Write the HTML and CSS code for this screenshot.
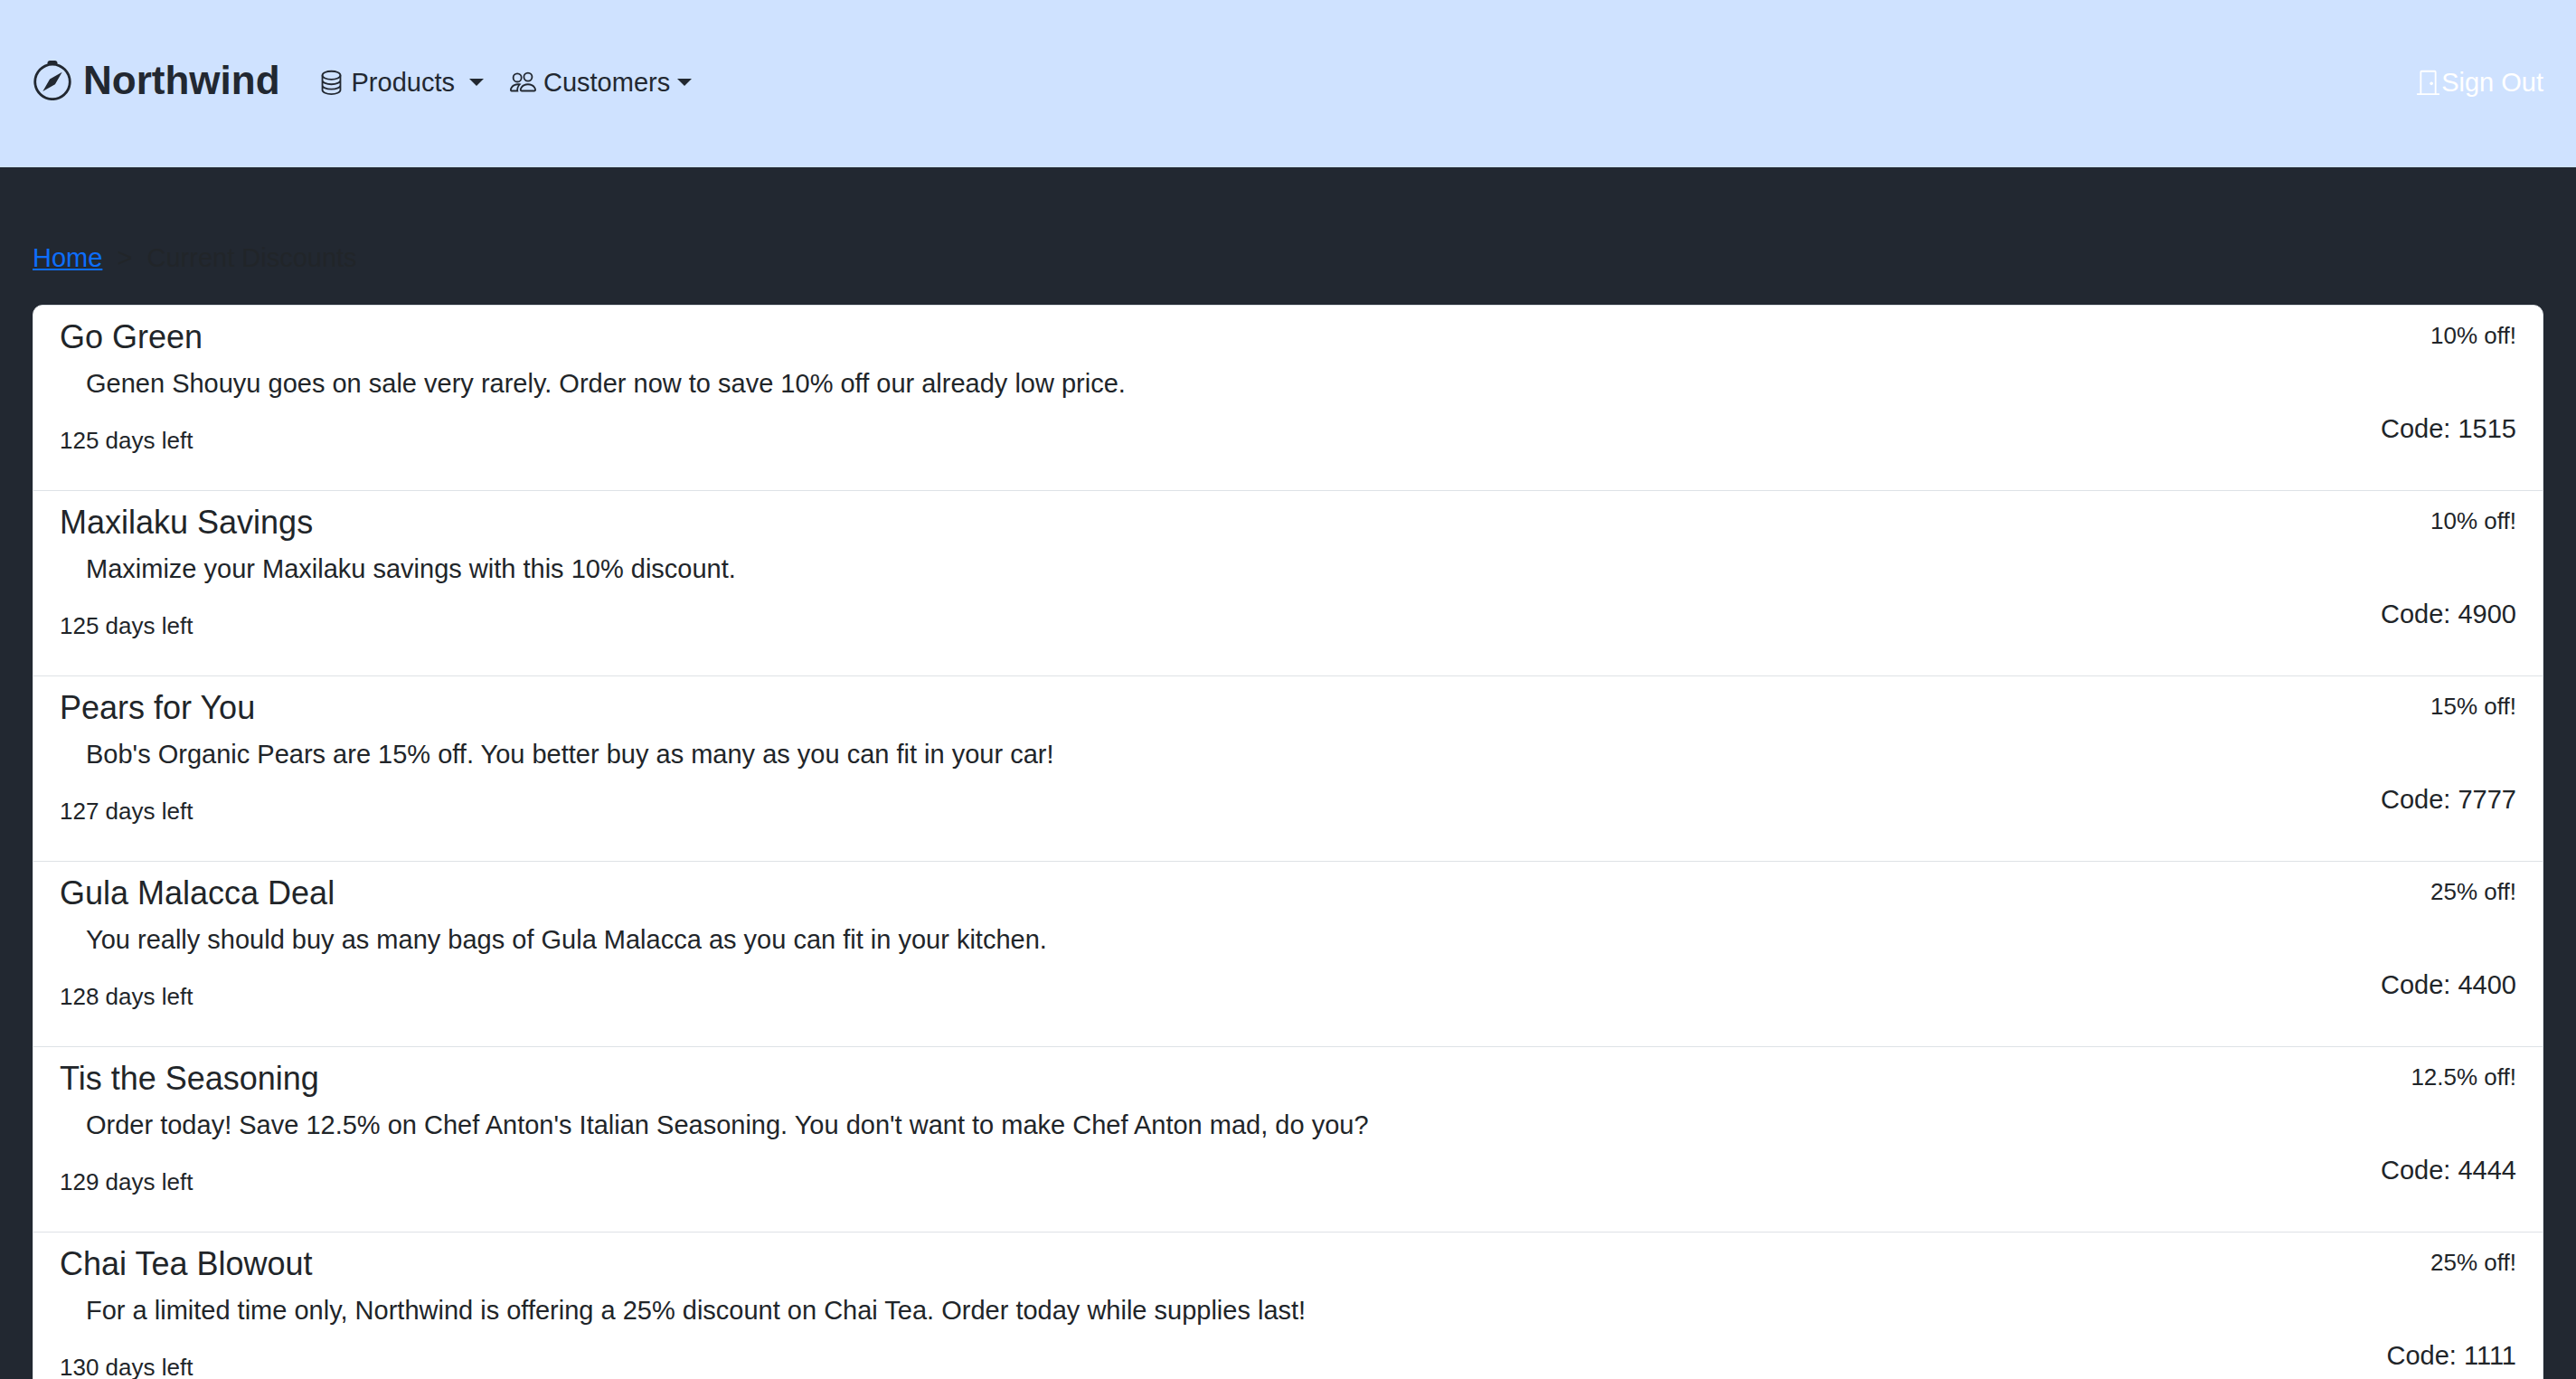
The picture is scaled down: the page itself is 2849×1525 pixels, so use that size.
FILE: index.html
```html
<!DOCTYPE html>
<html lang="en">
<head>
  <meta charset="utf-8">
  <meta name="viewport" content="width=device-width, initial-scale=1">
  <title>Northwind</title>
  <link rel="stylesheet" href="styles.css">
</head>
<body>
  <header class="navbar">
    <a class="brand" href="#">
      <svg class="brand-icon" viewBox="0 0 16 16" aria-hidden="true"><path d="M8 16.016a7.5 7.5 0 0 0 1.962-14.74A1 1 0 0 0 9 0H7a1 1 0 0 0-.962 1.276A7.5 7.5 0 0 0 8 16.016zm6.5-7.5a6.5 6.5 0 1 1-13 0 6.5 6.5 0 0 1 13 0z"/><path d="m6.94 7.44 4.95-2.83-2.83 4.95-4.949 2.83 2.828-4.95z"/></svg>
      Northwind
    </a>
    <nav class="menu">
      <button class="menu-item menu-item-wide" type="button">
        <svg class="icon" viewBox="0 0 16 16" aria-hidden="true"><g fill="none" stroke="currentColor"><ellipse cx="8" cy="4" rx="5.5" ry="2.5"/><path d="M2.5 4v9c0 1.38 2.46 2.5 5.5 2.5s5.5-1.12 5.5-2.5V4M2.5 7c0 1.38 2.46 2.5 5.5 2.5s5.5-1.12 5.5-2.5M2.5 10c0 1.38 2.46 2.5 5.5 2.5s5.5-1.12 5.5-2.5"/></g></svg>
        <span>Products</span>
        <span class="caret"></span>
      </button>
      <button class="menu-item" type="button">
        <svg class="icon" viewBox="0 0 16 16" aria-hidden="true"><path d="M15 14s1 0 1-1-1-4-5-4-5 3-5 4 1 1 1 1h8zm-7.978-1A.261.261 0 0 1 7 12.996c.001-.264.167-1.03.76-1.72C8.312 10.629 9.282 10 11 10c1.717 0 2.687.63 3.24 1.276.593.69.758 1.457.76 1.72l-.008.002a.274.274 0 0 1-.014.002H7.022zM11 7a2 2 0 1 0 0-4 2 2 0 0 0 0 4zm3-2a3 3 0 1 1-6 0 3 3 0 0 1 6 0zM6.936 9.28a5.88 5.88 0 0 0-1.23-.247A7.35 7.35 0 0 0 5 9c-4 0-5 3-5 4 0 .667.333 1 1 1h4.216A2.238 2.238 0 0 1 5 13c0-1.01.377-2.042 1.09-2.904.243-.294.526-.569.846-.816zM4.92 10A5.493 5.493 0 0 0 4 13H1c0-.26.164-1.03.76-1.724.545-.636 1.492-1.256 3.16-1.275zM1.5 5.5a3 3 0 1 1 6 0 3 3 0 0 1-6 0zm3-2a2 2 0 1 0 0 4 2 2 0 0 0 0-4z"/></svg>
        <span>Customers</span>
        <span class="caret"></span>
      </button>
    </nav>
    <a class="sign-out" href="#">
      <svg class="icon" viewBox="0 0 16 16" aria-hidden="true"><path d="M3 2a1 1 0 0 1 1-1h8a1 1 0 0 1 1 1v13h1.5a.5.5 0 0 1 0 1h-13a.5.5 0 0 1 0-1H3V2zm1 0v13h8V2H4z"/><path d="M9 9a1 1 0 1 0 2 0 1 1 0 0 0-2 0z"/></svg>
      Sign Out
    </a>
  </header>

  <main class="page">
    <p class="breadcrumb"><a href="#">Home</a> &nbsp;&gt;&nbsp; Current Discounts</p>

    <ul class="discounts">
      <li class="discount">
        <div class="details">
          <h2 class="title">Go Green</h2>
          <p class="description">Genen Shouyu goes on sale very rarely. Order now to save 10% off our already low price.</p>
          <small class="days">125 days left</small>
        </div>
        <div class="offer">
          <small class="percent">10% off!</small>
          <span class="code">Code: 1515</span>
        </div>
      </li>
      <li class="discount">
        <div class="details">
          <h2 class="title">Maxilaku Savings</h2>
          <p class="description">Maximize your Maxilaku savings with this 10% discount.</p>
          <small class="days">125 days left</small>
        </div>
        <div class="offer">
          <small class="percent">10% off!</small>
          <span class="code">Code: 4900</span>
        </div>
      </li>
      <li class="discount">
        <div class="details">
          <h2 class="title">Pears for You</h2>
          <p class="description">Bob's Organic Pears are 15% off. You better buy as many as you can fit in your car!</p>
          <small class="days">127 days left</small>
        </div>
        <div class="offer">
          <small class="percent">15% off!</small>
          <span class="code">Code: 7777</span>
        </div>
      </li>
      <li class="discount">
        <div class="details">
          <h2 class="title">Gula Malacca Deal</h2>
          <p class="description">You really should buy as many bags of Gula Malacca as you can fit in your kitchen.</p>
          <small class="days">128 days left</small>
        </div>
        <div class="offer">
          <small class="percent">25% off!</small>
          <span class="code">Code: 4400</span>
        </div>
      </li>
      <li class="discount">
        <div class="details">
          <h2 class="title">Tis the Seasoning</h2>
          <p class="description">Order today! Save 12.5% on Chef Anton's Italian Seasoning. You don't want to make Chef Anton mad, do you?</p>
          <small class="days">129 days left</small>
        </div>
        <div class="offer">
          <small class="percent">12.5% off!</small>
          <span class="code">Code: 4444</span>
        </div>
      </li>
      <li class="discount">
        <div class="details">
          <h2 class="title">Chai Tea Blowout</h2>
          <p class="description">For a limited time only, Northwind is offering a 25% discount on Chai Tea. Order today while supplies last!</p>
          <small class="days">130 days left</small>
        </div>
        <div class="offer">
          <small class="percent">25% off!</small>
          <span class="code">Code: 1111</span>
        </div>
      </li>
    </ul>
  </main>
</body>
</html>
```
FILE: styles.css
```css
*,
*::before,
*::after {
  box-sizing: border-box;
}

body {
  margin: 0;
  background: #222831;
  color: #212529;
  font-family: "Liberation Sans", Arial, sans-serif;
  font-size: 29px;
  line-height: 44px;
}

h2,
p,
ul {
  margin: 0;
  padding: 0;
  font-weight: 400;
}

/* Top bar */
.navbar {
  display: flex;
  align-items: center;
  padding: 55px 36px 63px;
  background: #cfe2ff;
  color: #222831;
}

.brand {
  display: flex;
  align-items: center;
  gap: 12px;
  color: inherit;
  font-size: 44px;
  font-weight: 700;
  line-height: 67px;
  text-decoration: none;
}

.brand-icon {
  width: 44px;
  height: 44px;
  fill: currentColor;
}

.icon {
  width: 29px;
  height: 29px;
  flex: none;
  fill: currentColor;
}

.menu {
  display: flex;
  gap: 29px;
  margin-left: 42px;
  padding-top: 4px;
}

.menu-item {
  display: flex;
  align-items: center;
  gap: 8px;
  padding: 0;
  border: 0;
  background: none;
  color: inherit;
  font: inherit;
}

.caret {
  border: 8px solid transparent;
  border-top-color: currentColor;
  border-bottom: 0;
}

.menu-item-wide .caret {
  margin-left: 8px;
}

.sign-out {
  display: flex;
  align-items: center;
  margin-left: auto;
  padding-top: 4px;
  color: #fff;
  text-decoration: none;
}

/* Page content */
.page {
  padding: 78px 36px 44px;
}

.breadcrumb {
  margin-bottom: 30px;
}

.breadcrumb a {
  color: #0d6efd;
}

.discounts {
  border: 1px solid #dee2e6;
  border-radius: 11px;
  background: #fff;
  list-style: none;
}

.discount {
  display: flex;
  justify-content: space-between;
  padding: 13px 29px 36px;
  border-bottom: 1px solid #dee2e6;
}

.discount:last-child {
  border-bottom: 0;
}

.title {
  margin-bottom: 7px;
  font-size: 36px;
  line-height: 44px;
}

.description {
  margin-bottom: 22px;
  padding-left: 29px;
}

.days,
.percent {
  display: block;
  font-size: 26px;
}

.days {
  line-height: 38px;
}

.offer {
  display: flex;
  flex-direction: column;
  gap: 61px;
  text-align: right;
}

.percent {
  line-height: 40px;
}
```
